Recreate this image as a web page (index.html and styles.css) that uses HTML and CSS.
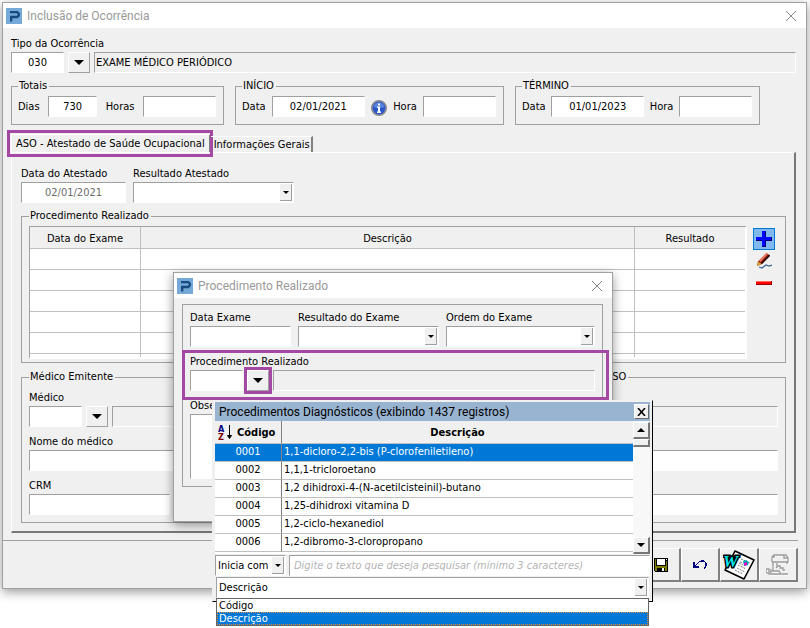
FILE: index.html
```
<!DOCTYPE html>
<html lang="pt-BR">

<head>
    <meta charset="UTF-8">
    <meta name="viewport" content="width=device-width, initial-scale=1.0">
    <title>Inclusão de Ocorrência</title>
    <link rel="stylesheet" href="styles.css">
</head>

<body>
    <div class="desktop">
        <main class="window">
            <header class="titlebar">
                <svg class="logo" viewBox="0 0 16 16" aria-hidden="true">
                    <rect width="16" height="16" fill="#74a9d8" />
                    <path d="M4 4.2h7.2l1.6 1.6v1.6l-1.6 1.6H5.2v4.5" fill="none" stroke="#174a80" stroke-width="2.3" />
                </svg>
                <h1>Inclusão de Ocorrência</h1>
                <button type="button" class="close" aria-label="Fechar">
                    <svg viewBox="0 0 12 12"><path d="M1 1l10 10M11 1L1 11" /></svg>
                </button>
            </header>

            <form class="content">
                <div class="group">
                    <label for="tipo">Tipo da Ocorrência</label>
                    <div class="lookup">
                        <input type="text" id="tipo" class="field center code" value="030">
                        <button type="button" class="drop" aria-label="Pesquisar tipo"></button>
                        <input type="text" class="field readonly grow" aria-label="Descrição do tipo" value="EXAME MÉDICO PERIÓDICO" readonly>
                    </div>
                </div>

                <div class="periods">
                    <fieldset class="box totals">
                        <legend>Totais</legend>
                        <label for="dias">Dias</label>
                        <input type="text" id="dias" class="field center days" value="730">
                        <label for="horas">Horas</label>
                        <input type="text" id="horas" class="field hour">
                    </fieldset>
                    <fieldset class="box start">
                        <legend>INÍCIO</legend>
                        <label for="inicio">Data</label>
                        <input type="text" id="inicio" class="field center date" value="02/01/2021">
                        <svg class="info" viewBox="0 0 16 16" aria-hidden="true">
                            <circle cx="8" cy="8" r="7.2" fill="#2a58c8" stroke="#8c8c94" stroke-width="1.6" />
                            <path d="M2.5 7a5.6 5.6 0 0 1 11 0q-5 2-11 0z" fill="#6d93e6" opacity=".7" />
                            <path d="M7 3.4h2v2H7zM6.2 6.6H9v5h1V13H6v-1.4h1V8h-.8z" fill="#fff" />
                        </svg>
                        <label for="hora-inicio">Hora</label>
                        <input type="text" id="hora-inicio" class="field hour">
                    </fieldset>
                    <fieldset class="box end">
                        <legend>TÉRMINO</legend>
                        <label for="termino">Data</label>
                        <input type="text" id="termino" class="field center date" value="01/01/2023">
                        <label for="hora-termino">Hora</label>
                        <input type="text" id="hora-termino" class="field hour">
                    </fieldset>
                </div>

                <div class="tabs" role="tablist">
                    <button type="button" class="tab selected" role="tab" aria-selected="true">ASO - Atestado de Saúde Ocupacional</button>
                    <button type="button" class="tab" role="tab" aria-selected="false">Informações Gerais</button>
                </div>

                <section class="panel">
                    <div class="row">
                        <div class="group">
                            <label for="data-atestado">Data do Atestado</label>
                            <input type="text" id="data-atestado" class="field center attest" value="02/01/2021" disabled>
                        </div>
                        <div class="group">
                            <label for="resultado">Resultado Atestado</label>
                            <div class="combo result"><select id="resultado"><option></option></select></div>
                        </div>
                    </div>

                    <fieldset class="box exams">
                        <legend>Procedimento Realizado</legend>
                        <table class="grid">
                            <thead>
                                <tr><th class="col-date">Data do Exame</th><th>Descrição</th><th class="col-result">Resultado</th></tr>
                            </thead>
                            <tbody>
                                <tr><td></td><td></td><td></td></tr>
                                <tr><td></td><td></td><td></td></tr>
                                <tr><td></td><td></td><td></td></tr>
                                <tr><td></td><td></td><td></td></tr>
                                <tr><td></td><td></td><td></td></tr>
                                <tr class="partial"><td></td><td></td><td></td></tr>
                            </tbody>
                        </table>
                        <div class="tools">
                            <button type="button" class="tool active" aria-label="Incluir">
                                <svg viewBox="0 0 16 16">
                                    <path d="M6 0h4v6h6v4h-6v6H6v-6H0V6h6z" fill="#00007c" />
                                    <path d="M6 0h3v6h6v3H9v6H6V9H0V6h6z" fill="#0008ff" />
                                </svg>
                            </button>
                            <button type="button" class="tool" aria-label="Alterar">
                                <svg viewBox="0 0 16 16">
                                    <path d="M2 8.500L10.500 0l3.500 2.500L6 11 1 13z" fill="#8e1c12" />
                                    <path d="M3 7.500L10.500 0l1.500 1-7.500 8z" fill="#f07a60" />
                                    <path d="M5 10l8-8.500 1 1.500-8 8z" fill="#2a0806" />
                                    <path d="M2 8.500l3.500 2.500L1 13z" fill="#e0a430" />
                                    <path d="M3 14l3 1 4-3 3 1 3-1" fill="none" stroke="#3c6298" stroke-width="1.300" />
                                </svg>
                            </button>
                            <button type="button" class="tool" aria-label="Excluir">
                                <svg viewBox="0 0 16 16">
                                    <path d="M0 6h16v4H0z" fill="#a00000" />
                                    <path d="M0 6h15v3H0z" fill="#ff0000" />
                                    <path d="M0 6h15v1H0z" fill="#ff6a50" />
                                </svg>
                            </button>
                        </div>
                    </fieldset>

                    <div class="doctors">
                        <fieldset class="box doctor issuer">
                            <legend>Médico Emitente</legend>
                            <div class="group">
                                <label for="medico">Médico</label>
                                <div class="lookup">
                                    <input type="text" id="medico" class="field code">
                                    <button type="button" class="drop" aria-label="Pesquisar médico"></button>
                                    <input type="text" class="field readonly grow" aria-label="Médico selecionado" readonly>
                                </div>
                            </div>
                            <div class="group">
                                <label for="nome">Nome do médico</label>
                                <input type="text" id="nome" class="field">
                            </div>
                            <div class="group">
                                <label for="crm">CRM</label>
                                <input type="text" id="crm" class="field crm">
                            </div>
                        </fieldset>
                        <fieldset class="box doctor coordinator">
                            <legend>Médico Responsável pelo PCMSO</legend>
                            <div class="lookup">
                                <input type="text" class="field code" aria-label="Médico responsável">
                                <button type="button" class="drop" aria-label="Pesquisar responsável"></button>
                                <input type="text" class="field readonly grow" aria-label="Responsável selecionado" readonly>
                            </div>
                            <input type="text" class="field" aria-label="Nome do responsável">
                            <input type="text" class="field" aria-label="CRM do responsável">
                        </fieldset>
                    </div>
                </section>
            </form>

            <footer class="actions">
                <button type="button" class="action" aria-label="Gravar">
                    <svg width="14" height="14" viewBox="0 0 14 14" shape-rendering="crispEdges">
                        <path d="M0 0h14v14H1l-1-1z" fill="#000" />
                        <path d="M1 1h1v7h10V3h1v10h-2v-3H3v3H1z" fill="#808000" />
                        <path d="M3 1h8v6H3z" fill="#fff" />
                        <path d="M8 10h2v3H8zM12 1h1v1h-1z" fill="#fff" />
                    </svg>
                </button>
                <button type="button" class="action" aria-label="Desfazer">
                    <svg width="14" height="10" viewBox="0 0 14 10" shape-rendering="crispEdges">
                        <path d="M1 2v5h5M2 6l4-4 2-1h3l2 2v3l-2 3" fill="none" stroke="#000080" stroke-width="1.200" />
                    </svg>
                </button>
                <button type="button" class="action" aria-label="Gerar documento Word">
                    <svg width="32" height="30" viewBox="0 0 32 30">
                        <path d="M12 1l19 9-10 19L2 20z" fill="#fff" stroke="#000" stroke-width="1.600" stroke-linejoin="round" />
                        <path d="M18 9l9 4M17 12l3 1M15 15l8 4M14 18l8 4M12 20l8 4M16 13l4 2" stroke="#808080" stroke-dasharray="2 1" />
                        <path d="M20 11l3-1 3 2-1 3-4 1z" fill="#00a8b8" />
                        <path d="M21 13l3-1v3l-3 1z" fill="#e000c0" />
                        <text x="0" y="17" class="word-mark">W</text>
                    </svg>
                </button>
                <button type="button" class="action" aria-label="Imprimir" disabled>
                    <svg width="24" height="22" viewBox="0 0 24 22" fill="none">
                        <g id="printer" stroke="#fff" transform="translate(1 1)">
                            <path d="M6 8V3l2-2h12l2 3v4H6M7 3h2M18 1v3h4" />
                            <path d="M7 8v9M21 8v2M11 9v3h3v2h3v2h2M12 12l-2 2M6 17h7l2 3H3l-3-2v-3h3v3h2v-3M16 20h6" />
                        </g>
                        <g stroke="#9a9a9a" stroke-width="1.300">
                            <path d="M6 8V3l2-2h12l2 3v4H6M7 3h2M18 1v3h4" />
                            <path d="M7 8v9M21 8v2M11 9v3h3v2h3v2h2M12 12l-2 2M6 17h7l2 3H3l-3-2v-3h3v3h2v-3M16 20h6" />
                        </g>
                    </svg>
                </button>
            </footer>
        </main>

        <!-- Procedimento dialog -->
        <section class="window dialog">
            <header class="titlebar">
                <svg class="logo" viewBox="0 0 16 16" aria-hidden="true">
                    <rect width="16" height="16" fill="#74a9d8" />
                    <path d="M4 4.2h7.2l1.6 1.6v1.6l-1.6 1.6H5.2v4.5" fill="none" stroke="#174a80" stroke-width="2.3" />
                </svg>
                <h2>Procedimento Realizado</h2>
                <button type="button" class="close" aria-label="Fechar">
                    <svg viewBox="0 0 12 12"><path d="M1 1l10 10M11 1L1 11" /></svg>
                </button>
            </header>
            <form class="dialog-panel">
                <div class="row">
                    <div class="group">
                        <label for="data-exame">Data Exame</label>
                        <input type="text" id="data-exame" class="field exam-date">
                    </div>
                    <div class="group">
                        <label for="resultado-exame">Resultado do Exame</label>
                        <div class="combo exam-result"><select id="resultado-exame"><option></option></select></div>
                    </div>
                    <div class="group grow">
                        <label for="ordem">Ordem do Exame</label>
                        <div class="combo"><select id="ordem"><option></option></select></div>
                    </div>
                </div>
                <div class="group highlight">
                    <label for="procedimento">Procedimento Realizado</label>
                    <div class="lookup">
                        <input type="text" id="procedimento" class="field code">
                        <button type="button" class="drop marked" aria-label="Pesquisar procedimento"></button>
                        <input type="text" class="field readonly grow" aria-label="Procedimento selecionado" readonly>
                    </div>
                </div>
                <div class="group">
                    <label for="obs">Observação</label>
                    <textarea id="obs" class="field notes"></textarea>
                </div>
            </form>
        </section>

        <!-- Search popup -->
        <section class="popup">
            <header class="popup-title">
                <h2>Procedimentos Diagnósticos (exibindo 1437 registros)</h2>
                <button type="button" class="popup-close" aria-label="Fechar">
                    <svg viewBox="0 0 9 8"><path d="M1 0l7 8M8 0L1 8" /></svg>
                </button>
            </header>
            <div class="list">
                <table class="records">
                    <thead>
                        <tr>
                            <th class="col-code">
                                <div class="sort">
                                    <svg width="15" height="18" viewBox="0 0 15 18" aria-hidden="true">
                                        <text x="0" y="8" class="sort-a">A</text>
                                        <text x="0" y="16" class="sort-z">Z</text>
                                        <path d="M11.500 1v13M9.500 11.500l2 3 2-3z" stroke="#000" />
                                    </svg>
                                    Código
                                </div>
                            </th>
                            <th>Descrição</th>
                        </tr>
                    </thead>
                    <tbody>
                        <tr class="current"><td>0001</td><td>1,1-dicloro-2,2-bis (P-clorofeniletileno)</td></tr>
                        <tr><td>0002</td><td>1,1,1-tricloroetano</td></tr>
                        <tr><td>0003</td><td>1,2 dihidroxi-4-(N-acetilcisteinil)-butano</td></tr>
                        <tr><td>0004</td><td>1,25-dihidroxi vitamina D</td></tr>
                        <tr><td>0005</td><td>1,2-ciclo-hexanediol</td></tr>
                        <tr><td>0006</td><td>1,2-dibromo-3-cloropropano</td></tr>
                    </tbody>
                </table>
                <div class="scrollbar">
                    <button type="button" class="scroll-up" aria-label="Rolar para cima"></button>
                    <div class="thumb"></div>
                    <button type="button" class="scroll-down" aria-label="Rolar para baixo"></button>
                </div>
            </div>
            <div class="filter">
                <div class="combo mode"><select aria-label="Modo de pesquisa"><option>Inicia com</option></select></div>
                <input type="text" class="field grow" aria-label="Texto da pesquisa" placeholder="Digite o texto que deseja pesquisar (mínimo 3 caracteres)">
            </div>
            <div class="combo column"><select aria-label="Coluna da pesquisa"><option>Descrição</option></select></div>
            <ul class="options">
                <li>Código</li>
                <li class="current">Descrição</li>
            </ul>
        </section>
    </div>
</body>

</html>
```

FILE: styles.css
```
* {
    box-sizing: border-box;
}

body {
    margin: 0;
    background: #fff;
    color: #000;
    font: 11px/14px "DejaVu Sans Condensed", "DejaVu Sans", sans-serif;
}

input,
select,
textarea,
button {
    margin: 0;
    padding: 0;
    border: 0;
    border-radius: 0;
    background: none;
    color: inherit;
    font: inherit;
}

h1,
h2 {
    margin: 0;
    font-weight: normal;
}

.desktop {
    position: relative;
    min-height: 100vh;
    padding: 2px 3px 2px 2px;
}

/* Windows */
.window {
    background: #f0f0f0;
    border: 1px solid #a0a0a0;
    box-shadow: 0 3px 10px rgba(0, 0, 0, 0.4);
}

.titlebar {
    display: flex;
    align-items: center;
    gap: 5px;
    height: 25px;
    padding: 0 9px 0 3px;
    background: #fff;
    color: #999;
    font-family: Roboto, sans-serif;
}

.titlebar h1,
.titlebar h2 {
    flex: 1;
    font-size: 12px;
}

.logo {
    width: 16px;
    height: 16px;
}

.close {
    width: 12px;
    height: 12px;
}

.close svg {
    display: block;
    stroke: #888;
    fill: none;
}

.content {
    padding: 9px 10px 0 8px;
}

/* Fields */
.group {
    display: flex;
    flex-direction: column;
    gap: 1px;
}

.row {
    display: flex;
    gap: 7px;
}

.grow {
    flex: 1;
    min-width: 0;
}

.lookup {
    display: flex;
}

.field {
    height: 21px;
    padding: 0 1px;
    background: #fff;
    border: 1px solid #fff;
    border-top-color: #a0a0a0;
    border-left-color: #a0a0a0;
}

.field:disabled {
    color: #6d6d6d;
}

.readonly {
    background: #f0f0f0;
}

.center {
    text-align: center;
}

.code {
    width: 53px;
}

.days {
    width: 49px;
}

.date {
    width: 93px;
}

.hour {
    width: 73px;
}

.attest {
    width: 105px;
}

.crm {
    width: 141px;
}

.drop {
    display: flex;
    align-items: center;
    justify-content: center;
    width: 22px;
    height: 21px;
    margin: 0 4px;
    border: 1px solid #fff;
    border-right-color: #a0a0a0;
    border-bottom-color: #a0a0a0;
}

.drop::before {
    content: "";
    border: 5px solid transparent;
    border-top-color: #000;
    border-bottom: 0;
}

.combo {
    position: relative;
    height: 21px;
    background: #fff;
    border: 1px solid #fff;
    border-top-color: #a0a0a0;
    border-left-color: #a0a0a0;
}

.combo select {
    display: block;
    width: 100%;
    height: 19px;
    padding: 0 13px 0 2px;
    appearance: none;
}

.combo::after {
    content: "";
    position: absolute;
    top: 1px;
    right: 1px;
    bottom: 1px;
    width: 11px;
    background: #f0f0f0;
    border-right: 1px solid #a0a0a0;
    border-bottom: 1px solid #a0a0a0;
    pointer-events: none;
}

.combo::before {
    content: "";
    position: absolute;
    z-index: 1;
    top: 8px;
    right: 4px;
    border: 3px solid transparent;
    border-top-color: #000;
    border-bottom: 0;
    pointer-events: none;
}

.result {
    width: 161px;
}

/* Group boxes */
.box {
    display: flex;
    min-width: 0;
    margin: 0;
    padding: 3px 7px 7px 6px;
    border: 1px solid #a0a0a0;
}

.box legend {
    padding: 0 2px 0 1px;
}

.periods {
    display: flex;
    gap: 11px;
    margin-top: 6px;
}

.periods .box {
    align-items: center;
    justify-content: space-between;
}

.totals {
    width: 213px;
}

.start {
    width: 269px;
}

.end {
    width: 245px;
}

.info {
    width: 16px;
    height: 16px;
    margin-top: 2px;
}

/* Tabs */
.tabs {
    display: flex;
    align-items: flex-end;
    margin-top: 9px;
}

.tab {
    position: relative;
    height: 16px;
    padding: 0 1px 0 3px;
    border-top: 1px solid #fff;
    border-right: 2px solid #808080;
    white-space: nowrap;
}

.tab.selected {
    height: 18px;
    padding: 0 4px;
    border-left: 1px solid #fff;
}

.tab.selected::after {
    content: "";
    position: absolute;
    inset: -5px -4px -5px -5px;
    border: 3px solid #a349a4;
}

.panel {
    padding: 14px 8px 8px 9px;
    border: 1px solid #fff;
    border-right: 2px solid #777;
    border-bottom: 2px solid #777;
}

.exams {
    gap: 6px;
    margin-top: 6px;
    padding: 3px 10px 3px 7px;
}

.grid {
    flex: 1;
    height: 133px;
    border: 1px solid #a0a0a0;
    border-right: 2px solid #fff;
    border-bottom: 2px solid #fff;
    border-spacing: 0;
    table-layout: fixed;
    background: #fff;
}

.grid th,
.grid td {
    height: 21px;
    padding: 0;
    border-right: 1px solid #c0c0c0;
    border-bottom: 1px solid #c0c0c0;
}

.grid th {
    height: 22px;
    padding-top: 2px;
    background: #f0f0f0;
    font-weight: normal;
}

.grid th:last-child,
.grid td:last-child {
    border-right: 0;
}

.grid .partial td {
    height: 3px;
    border-bottom: 0;
}

.col-date {
    width: 111px;
}

.col-result {
    width: 110px;
}

.tools {
    display: flex;
    flex-direction: column;
    width: 22px;
    padding-top: 2px;
}

.tool {
    display: flex;
    align-items: center;
    justify-content: center;
    width: 22px;
    height: 22px;
}

.tool svg {
    width: 16px;
    height: 16px;
}

.tool.active {
    background: #7fb9ee;
    border: 1px solid #0078d7;
}

.doctors {
    display: flex;
    gap: 6px;
    margin-top: 7px;
}

.doctor {
    flex-direction: column;
    gap: 8px;
    padding-top: 7px;
    padding-left: 7px;
}

.issuer {
    flex: 13;
}

.coordinator {
    flex: 10;
    gap: 23px;
    padding-top: 22px;
}

/* Bottom bar */
.actions {
    display: flex;
    justify-content: flex-end;
    margin: 7px 8px 0 0;
    padding: 7px 0 6px;
    border-top: 1px solid #a0a0a0;
}

.action {
    display: flex;
    align-items: center;
    justify-content: center;
    width: 39px;
    height: 34px;
    border: 1px solid #fff;
    border-right: 2px solid #808080;
    border-bottom: 2px solid #808080;
}

.word-mark {
    font: italic bold 17px "Liberation Serif", serif;
    fill: #00e8f0;
    stroke: #000;
    stroke-width: 3px;
    paint-order: stroke;
}

/* Dialog */
.dialog {
    position: absolute;
    left: 173px;
    top: 272px;
    width: 440px;
    padding-bottom: 34px;
}

.dialog-panel {
    display: flex;
    flex-direction: column;
    gap: 8px;
    margin: 6px 9px 0 8px;
    padding: 6px 7px 7px;
    border: 1px solid #a0a0a0;
}

.exam-date {
    width: 101px;
}

.exam-result {
    width: 141px;
}

.highlight {
    position: relative;
}

.highlight::after {
    content: "";
    position: absolute;
    inset: -5px -14px -9px -8px;
    border: 3px solid #a349a4;
    pointer-events: none;
}

.marked {
    outline: 3px solid #a349a4;
}

.notes {
    height: 65px;
    resize: none;
}

/* Search popup */
.popup {
    position: absolute;
    left: 212px;
    top: 400px;
    width: 441px;
    height: 202px;
    padding: 1px 2px;
    background: #f0f0f0;
    border: 1px solid #f0f0f0;
    border-right-color: #000;
    border-bottom-color: #000;
}

.popup-title {
    display: flex;
    align-items: center;
    justify-content: space-between;
    height: 19px;
    padding: 0 1px 0 4px;
    background: #99b4d1;
}

.popup-title h2 {
    font: 12px/16px Roboto, sans-serif;
}

.popup-close {
    display: flex;
    align-items: center;
    justify-content: center;
    width: 15px;
    height: 15px;
    background: #f0f0f0;
    border: 1px solid #fff;
    border-right-color: #696969;
    border-bottom-color: #696969;
}

.popup-close svg {
    width: 9px;
    height: 8px;
    stroke: #000;
    stroke-width: 1.5;
}

.list {
    display: flex;
    height: 133px;
    background: #fff;
}

.records {
    flex: 1;
    align-self: flex-start;
    border-spacing: 0;
    table-layout: fixed;
}

.records th {
    height: 23px;
    padding: 2px 0 0;
    background: #f0f0f0;
    border-bottom: 1px solid #c0c0c0;
}

.records td {
    height: 18px;
    padding: 0 2px 2px;
    border-bottom: 1px solid #c0c0c0;
}

.records th:first-child,
.records td:first-child {
    border-right: 1px solid #808080;
    text-align: center;
}

.records .current td {
    background: #0078d7;
    color: #fff;
}

.col-code {
    width: 67px;
}

.sort {
    display: flex;
    align-items: center;
    gap: 4px;
    padding-left: 3px;
}

.sort-a,
.sort-z {
    font: bold 9px "DejaVu Sans Condensed", sans-serif;
    fill: #000080;
}

.sort-z {
    fill: #800000;
}

.scrollbar {
    display: flex;
    flex-direction: column;
    width: 17px;
    background: #f8f8f8;
}

.scroll-up,
.scroll-down,
.thumb {
    display: flex;
    align-items: center;
    justify-content: center;
    height: 17px;
    background: #f0f0f0;
    border: 1px solid #fff;
    border-right: 2px solid #777;
    border-bottom: 2px solid #777;
}

.scroll-up {
    margin-top: 1px;
}

.thumb {
    height: 8px;
}

.scroll-down {
    margin-top: auto;
}

.scroll-up::before,
.scroll-down::before {
    content: "";
    border: 4px solid transparent;
    border-top: 0;
    border-bottom-color: #000;
}

.scroll-down::before {
    border-top: 4px solid #000;
    border-bottom: 0;
}

.filter {
    display: flex;
    gap: 3px;
    margin-top: 1px;
}

.filter .field {
    padding-left: 4px;
}

.filter .field::placeholder {
    color: #b4b4b4;
    font-style: italic;
}

.mode {
    width: 71px;
}

.column {
    margin: 1px 1px 0;
}

.options {
    position: relative;
    margin: 0 1px;
    padding: 0;
    background: #fff;
    border: 1px solid #646464;
    list-style: none;
    line-height: 13px;
}

.options li {
    padding-left: 2px;
}

.options .current {
    background: #0078d7;
    color: #fff;
    outline: 1px dotted #e08a3c;
    outline-offset: -1px;
}
```
